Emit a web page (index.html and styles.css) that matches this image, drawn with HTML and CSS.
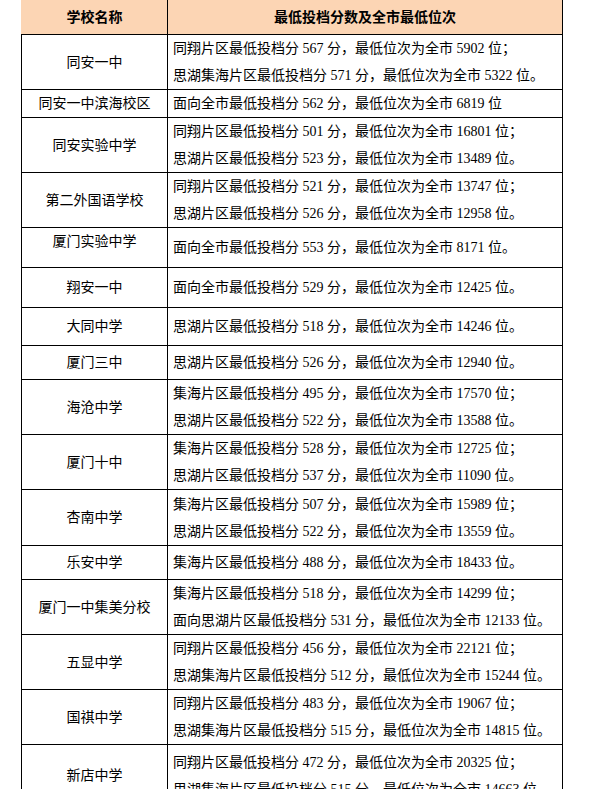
FILE: index.html
```html
<!DOCTYPE html>
<html lang="zh-CN">
<head>
<meta charset="utf-8">
<title>最低投档分数及全市最低位次</title>
<link rel="stylesheet" href="styles.css">
</head>
<body>
<table class="score-table">
  <colgroup><col class="col-name"><col class="col-data"></colgroup>
  <thead>
    <tr class="head-row"><th>学校名称</th><th>最低投档分数及全市最低位次</th></tr>
  </thead>
  <tbody>
    <tr class="r55"><td class="name">同安一中</td><td class="data"><div>同翔片区最低投档分 567 分，最低位次为全市 5902 位；</div><div>思湖集海片区最低投档分 571 分，最低位次为全市 5322 位。</div></td></tr>
    <tr class="r28"><td class="name">同安一中滨海校区</td><td class="data"><div>面向全市最低投档分 562 分，最低位次为全市 6819 位</div></td></tr>
    <tr class="r55"><td class="name">同安实验中学</td><td class="data"><div>同翔片区最低投档分 501 分，最低位次为全市 16801 位；</div><div>思湖片区最低投档分 523 分，最低位次为全市 13489 位。</div></td></tr>
    <tr class="r55"><td class="name">第二外国语学校</td><td class="data"><div>同翔片区最低投档分 521 分，最低位次为全市 13747 位；</div><div>思湖片区最低投档分 526 分，最低位次为全市 12958 位。</div></td></tr>
    <tr class="r40"><td class="name top">厦门实验中学</td><td class="data"><div>面向全市最低投档分 553 分，最低位次为全市 8171 位。</div></td></tr>
    <tr class="r40"><td class="name">翔安一中</td><td class="data"><div>面向全市最低投档分 529 分，最低位次为全市 12425 位。</div></td></tr>
    <tr class="r38"><td class="name">大同中学</td><td class="data"><div>思湖片区最低投档分 518 分，最低位次为全市 14246 位。</div></td></tr>
    <tr class="r34"><td class="name">厦门三中</td><td class="data"><div>思湖片区最低投档分 526 分，最低位次为全市 12940 位。</div></td></tr>
    <tr class="r55"><td class="name">海沧中学</td><td class="data"><div>集海片区最低投档分 495 分，最低位次为全市 17570 位；</div><div>思湖片区最低投档分 522 分，最低位次为全市 13588 位。</div></td></tr>
    <tr class="r55"><td class="name">厦门十中</td><td class="data"><div>集海片区最低投档分 528 分，最低位次为全市 12725 位；</div><div>思湖片区最低投档分 537 分，最低位次为全市 11090 位。</div></td></tr>
    <tr class="r56"><td class="name">杏南中学</td><td class="data"><div>集海片区最低投档分 507 分，最低位次为全市 15989 位；</div><div>思湖片区最低投档分 522 分，最低位次为全市 13559 位。</div></td></tr>
    <tr class="r34"><td class="name">乐安中学</td><td class="data"><div>集海片区最低投档分 488 分，最低位次为全市 18433 位。</div></td></tr>
    <tr class="r55"><td class="name">厦门一中集美分校</td><td class="data"><div>集海片区最低投档分 518 分，最低位次为全市 14299 位；</div><div>面向思湖片区最低投档分 531 分，最低位次为全市 12133 位。</div></td></tr>
    <tr class="r55"><td class="name">五显中学</td><td class="data"><div>同翔片区最低投档分 456 分，最低位次为全市 22121 位；</div><div>思湖集海片区最低投档分 512 分，最低位次为全市 15244 位。</div></td></tr>
    <tr class="r55"><td class="name">国祺中学</td><td class="data"><div>同翔片区最低投档分 483 分，最低位次为全市 19067 位；</div><div>思湖集海片区最低投档分 515 分，最低位次为全市 14815 位。</div></td></tr>
    <tr class="r62"><td class="name">新店中学</td><td class="data"><div>同翔片区最低投档分 472 分，最低位次为全市 20325 位；</div><div>思湖集海片区最低投档分 515 分，最低位次为全市 14663 位。</div></td></tr>
  </tbody>
</table>
</body>
</html>
```
FILE: styles.css
```css
html, body {
  margin: 0;
  padding: 0;
  background: #ffffff;
}
body {
  font-family: "Liberation Serif", "Noto Sans CJK SC", sans-serif;
  font-size: 14px;
  color: #000000;
}
.score-table {
  margin-left: 21px;
  width: 541px;
  border-collapse: collapse;
  table-layout: fixed;
}
.col-name { width: 146px; }
.col-data { width: 395px; }
.score-table th,
.score-table td {
  border: 1px solid #000000;
  padding: 0 5px;
  line-height: 27px;
  white-space: nowrap;
}
.head-row th {
  height: 34px;
  background: #fcd5b4;
  font-weight: bold;
  text-align: center;
  border-top: none;
  padding: 0;
}
.head-row th:first-child {
  border-left-color: #fcd5b4;
}
.name {
  text-align: center;
  vertical-align: middle;
  padding: 0;
}
.name.top {
  vertical-align: top;
}
.data {
  text-align: left;
  vertical-align: middle;
}
.r28 { height: 28px; }
.r34 { height: 34px; }
.r38 { height: 38px; }
.r40 { height: 40px; }
.r55 { height: 55px; }
.r56 { height: 56px; }
.r62 { height: 62px; }
```
